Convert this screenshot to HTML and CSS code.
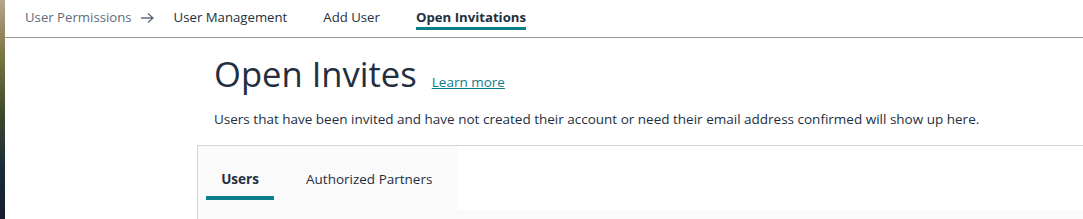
FILE: index.html
```html
<!DOCTYPE html>
<html lang="en">
<head>
    <meta charset="UTF-8">
    <meta name="viewport" content="width=device-width, initial-scale=1.0">
    <title>Open Invitations</title>
    <link rel="stylesheet" href="styles.css">
</head>
<body>
<div class="page">
    <div class="side-strip"></div>
    <div class="main">
        <nav class="top-nav">
            <span class="crumb">User Permissions</span>
            <svg class="crumb-arrow" width="15" height="12" viewBox="0 0 15 12">
                <path d="M1 6 H13 M8 1.5 L13 6 L8 10.5" fill="none" stroke="#5f6b7a" stroke-width="1.3"/>
            </svg>
            <a class="nav-link" href="#">User Management</a>
            <a class="nav-link" href="#">Add User</a>
            <a class="nav-link active" href="#">Open Invitations</a>
        </nav>
        <div class="content">
            <div class="heading">
                <h1>Open Invites</h1>
                <a href="#" class="learn-more">Learn more</a>
            </div>
            <p class="description">Users that have been invited and have not created their account or need their email address confirmed will show up here.</p>
            <div class="tabs-box">
                <div class="tabs-row">
                    <div class="tabs">
                        <div class="tab active">Users</div>
                        <div class="tab">Authorized Partners</div>
                    </div>
                    <div class="tabs-fill"></div>
                </div>
                <div class="tabs-body"></div>
            </div>
        </div>
    </div>
</div>
</body>
</html>
```

FILE: styles.css
```css
body {
    margin: 0;
    font-family: 'Open Sans', 'Noto Sans', Arial, sans-serif;
    color: #232f3e;
    background: #fff;
}

.page {
    display: flex;
    min-height: 219px;
}

.side-strip {
    width: 5px;
    flex-shrink: 0;
    background: linear-gradient(180deg, #b3a58b 0%, #7a7440 25%, #3d4a2c 50%, #1b2a3a 75%, #141d2b 100%);
}

.main {
    flex: 1;
}

.top-nav {
    display: flex;
    align-items: flex-start;
    height: 38px;
    padding-left: 20px;
    border-bottom: 1px solid #999;
    box-sizing: border-box;
    font-size: 13.2px;
}

.crumb,
.nav-link {
    padding-top: 8px;
    line-height: 19px;
    white-space: nowrap;
}

.crumb {
    color: #5f6b7a;
}

.crumb-arrow {
    margin: 12px 19px 0 8px;
    flex-shrink: 0;
}

.nav-link {
    color: #232f3e;
    text-decoration: none;
    margin-right: 36px;
    height: 22px;
}

.nav-link.active {
    font-weight: bold;
    border-bottom: 3px solid #0b7e8a;
    height: 19px;
}

.content {
    padding-left: 192px;
}

.heading {
    display: flex;
    align-items: baseline;
    padding-left: 17px;
    margin-top: 13px;
}

h1 {
    margin: 0;
    font-size: 34.6px;
    font-weight: normal;
    line-height: 46px;
}

.learn-more {
    margin-left: 15px;
    color: #0b7e8a;
    font-size: 13.5px;
}

.description {
    margin: 12px 0 0 17px;
    font-size: 13.5px;
    line-height: 20px;
}

.tabs-box {
    margin-top: 16px;
    border-top: 1px solid #d5d5d5;
    border-left: 1px solid #d5d5d5;
    background: #fafafa;
    height: 80px;
}

.tabs-row {
    display: flex;
    height: 64px;
}

.tabs {
    display: flex;
    flex-shrink: 0;
    background: #fafafa;
    padding-left: 8px;
    width: 251px;
}

.tab {
    font-size: 13.5px;
    line-height: 19px;
    padding-top: 24px;
    margin-right: 32px;
    box-sizing: border-box;
    white-space: nowrap;
}

.tab.active {
    font-weight: bold;
    width: 68px;
    flex-shrink: 0;
    text-align: center;
    height: 54px;
    border-bottom: 4px solid #0b7e8a;
}

.tabs-fill {
    flex: 1;
    background: #fff;
}

.tabs-body {
    height: 16px;
}
```
